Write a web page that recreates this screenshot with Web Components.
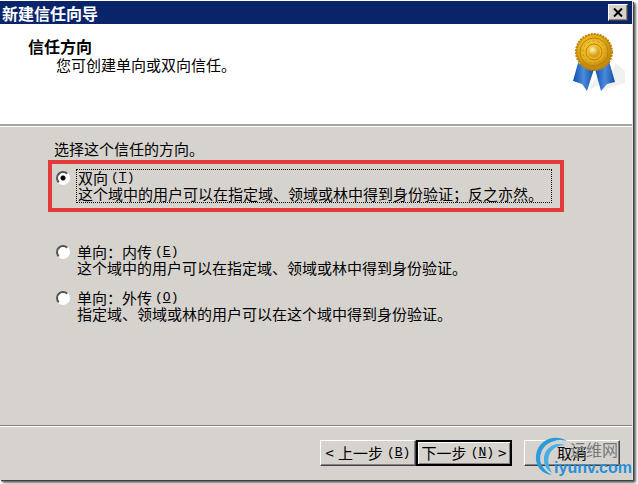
<!DOCTYPE html>
<html lang="zh-CN">
<head>
<meta charset="utf-8">
<meta name="viewport" content="width=device-width, initial-scale=1">
<title>新建信任向导</title>
<style>
  body {
    margin: 0;
    background: white;
    font: 15px/16px "Noto Sans CJK SC", sans-serif;
    color: black;
  }
</style>
</head>
<body>
<trust-wizard>
  <title-bar slot="title">新建信任向导</title-bar>
  <wizard-header slot="header">
    信任方向
    <span slot="subtitle">您可创建单向或双向信任。</span>
  </wizard-header>
  <direction-options>选择这个信任的方向。</direction-options>
  <wizard-button slot="actions" key="B" before="&lt;">上一步</wizard-button>
  <wizard-button slot="actions" key="N" after="&gt;" default>下一步</wizard-button>
  <wizard-button slot="actions" spaced>取消</wizard-button>
  <site-watermark slot="watermark"></site-watermark>
</trust-wizard>

<script>
class TrustWizard extends HTMLElement {
  constructor() {
    super();
    this.attachShadow({ mode: 'open' }).innerHTML = `
      <style>
        :host {
          display: flex;
          box-sizing: border-box;
          min-height: 100vh;
          padding: 1px 5px 4px 0;
        }
        .window {
          flex: 1;
          position: relative;
          display: flex;
          flex-direction: column;
          background: #d6d3ce;
          border-right: 1px solid #e8e6e2;
          box-shadow: 1px 1px 0 #404040, 2px 2px 2px #555, 3px 3px 3px #999;
        }
        main {
          flex: 1;
          padding: 14px 48px 0 50px;
        }
        footer {
          display: flex;
          justify-content: flex-end;
          padding: 14px 12px;
          border-top: 1px solid #848284;
          box-shadow: inset 0 1px white;
        }
      </style>
      <div class="window">
        <slot name="title"></slot>
        <slot name="header"></slot>
        <main><slot></slot></main>
        <footer><slot name="actions"></slot></footer>
        <slot name="watermark"></slot>
      </div>
    `;
  }
}

class TitleBar extends HTMLElement {
  constructor() {
    super();
    this.attachShadow({ mode: 'open' }).innerHTML = `
      <style>
        :host {
          display: flex;
          align-items: center;
          justify-content: space-between;
          height: 23px;
          padding: 0 4px 0 2px;
          background: #0a246a;
          color: white;
          font-size: 16px;
          font-weight: 700;
        }
        button {
          display: grid;
          place-items: center;
          width: 20px;
          height: 17px;
          padding: 0;
          background: #d6d3ce;
          border: 1px solid;
          border-color: white #404040 #404040 white;
          box-shadow: inset -1px -1px #848284;
        }
      </style>
      <span><slot></slot></span>
      <button type="button" aria-label="关闭">
        <svg width="10" height="9" viewBox="0 0 10 9">
          <path d="M1 0.5 L9 8.5 M9 0.5 L1 8.5" stroke="black" stroke-width="2"/>
        </svg>
      </button>
    `;
  }
}

class WizardHeader extends HTMLElement {
  constructor() {
    super();
    this.attachShadow({ mode: 'open' }).innerHTML = `
      <style>
        :host {
          display: flex;
          justify-content: space-between;
          height: 100px;
          background: white;
          border-bottom: 2px solid #a5a2a0;
          box-shadow: 0 1px white;
        }
        .text { padding: 12px 0 0 28px; }
        h1 {
          margin: 0;
          font-size: 16px;
          line-height: 20px;
        }
        p {
          margin: 0;
          padding: 0 0 0 28px;
          line-height: 18px;
        }
        svg { margin: 7px 6px 0 0; }
      </style>
      <div class="text">
        <h1><slot></slot></h1>
        <p><slot name="subtitle"></slot></p>
      </div>
      <svg width="54" height="62" viewBox="0 0 54 62" aria-hidden="true">
        <defs>
          <radialGradient id="gold" cx="45%" cy="40%">
            <stop offset="0" stop-color="#f8d23c"/>
            <stop offset=".7" stop-color="#e6b01a"/>
            <stop offset="1" stop-color="#c48b0c"/>
          </radialGradient>
          <radialGradient id="knob" cx="38%" cy="30%">
            <stop offset="0" stop-color="#fff6b0"/>
            <stop offset="1" stop-color="#d9a01c"/>
          </radialGradient>
          <linearGradient id="ribbon">
            <stop offset="0" stop-color="#0d4fae"/>
            <stop offset=".5" stop-color="#4b8ade"/>
            <stop offset="1" stop-color="#134f9f"/>
          </linearGradient>
        </defs>
        <path d="M16 60 L28 40 L32 50 Z M30 59 L44 32 L53 40 L53 52 Z" fill="#f0f0f0"/>
        <path d="M6 32 L22 38 L15 60 L10 53 L1 50 Z" fill="url(#ribbon)"/>
        <path d="M23 38 L37 30 L43 51 L35 53 L29 60 Z" fill="url(#ribbon)"/>
        <circle cx="22" cy="21" r="18" fill="url(#gold)"/>
        <circle cx="22" cy="21" r="18" fill="none" stroke="#bd8408" stroke-width="2" stroke-dasharray="2 1"/>
        <circle cx="22" cy="21" r="14" fill="none" stroke="#bb8210"/>
        <circle cx="22" cy="21" r="11" fill="none" stroke="#c8921a" stroke-dasharray="2 3"/>
        <circle cx="22" cy="21" r="8" fill="none" stroke="#b9800e"/>
        <circle cx="22" cy="21" r="6" fill="url(#knob)"/>
      </svg>
    `;
  }
}

class DirectionOptions extends HTMLElement {
  constructor() {
    super();
    const options = [
      { id: 'both', name: '双向', key: 'T', text: '这个域中的用户可以在指定域、领域或林中得到身份验证；反之亦然。' },
      { id: 'in', name: '单向：内传', key: 'E', text: '这个域中的用户可以在指定域、领域或林中得到身份验证。' },
      { id: 'out', name: '单向：外传', key: 'O', text: '指定域、领域或林的用户可以在这个域中得到身份验证。' }
    ];
    this.attachShadow({ mode: 'open' }).innerHTML = `
      <style>
        :host { display: block; }
        fieldset {
          margin: 0;
          padding: 0;
          border: 0;
          min-width: 0;
        }
        legend {
          padding: 0 0 0 4px;
          line-height: 18px;
        }
        .option {
          display: flex;
          align-items: flex-start;
          gap: 6px;
          padding: 0 6px;
          margin-bottom: 14px;
        }
        .option.both {
          width: fit-content;
          padding: 5px 8px 5px 4px;
          margin: 2px 0 32px -2px;
          border: 4px solid #e33b3b;
        }
        input {
          appearance: none;
          flex: none;
          box-sizing: border-box;
          width: 14px;
          height: 14px;
          margin: 1px 0 0;
          border: 2px solid;
          border-color: #555 white white #555;
          border-radius: 50%;
          background: white;
        }
        input:checked {
          background: radial-gradient(circle, black 2px, white 3px);
        }
        label { padding: 0 1px; }
        .both label {
          padding: 0 8px 0 1px;
          border: 1px dotted black;
        }
        .both input { margin-top: 2px; }
        .name {
          display: flex;
          align-items: center;
          gap: 3px;
          height: 16px;
        }
        .key { font: 13px/16px "Liberation Mono", monospace; }
        .text { display: block; }
      </style>
      <fieldset>
        <legend><slot></slot></legend>
        ${options.map(option => `
          <div class="option ${option.id}">
            <input type="radio" name="direction" id="${option.id}" ${option.id === 'both' ? 'checked' : ''}>
            <label for="${option.id}">
              <span class="name">${option.name}<span class="key">(<u>${option.key}</u>)</span></span>
              <span class="text">${option.text}</span>
            </label>
          </div>
        `).join('')}
      </fieldset>
    `;
  }
}

class WizardButton extends HTMLElement {
  constructor() {
    super();
    this.attachShadow({ mode: 'open' });
  }

  connectedCallback() {
    const key = this.getAttribute('key');
    const before = this.getAttribute('before');
    const after = this.getAttribute('after');
    this.shadowRoot.innerHTML = `
      <style>
        :host { display: block; }
        :host([spaced]) { margin-left: 12px; }
        button {
          display: flex;
          align-items: center;
          justify-content: center;
          gap: 4px;
          width: 96px;
          height: 26px;
          padding: 0;
          background: #d6d3ce;
          border: 1px solid;
          border-color: white #404040 #404040 white;
          box-shadow: inset -1px -1px #848284;
          color: black;
          font: inherit;
          white-space: nowrap;
        }
        :host([default]) button {
          border: 2px solid black;
          box-shadow: inset 1px 1px white, inset -1px -1px #848284;
        }
        .key { font: 13px/16px "Liberation Mono", monospace; }
      </style>
      <button type="button">
        ${before ? `<span>${before}</span>` : ''}
        <slot></slot>
        ${key ? `<span class="key">(<u>${key}</u>)</span>` : ''}
        ${after ? `<span>${after}</span>` : ''}
      </button>
    `;
  }
}

class SiteWatermark extends HTMLElement {
  constructor() {
    super();
    this.attachShadow({ mode: 'open' }).innerHTML = `
      <style>
        :host {
          position: absolute;
          right: 0;
          bottom: 2px;
          display: flex;
          align-items: flex-end;
          pointer-events: none;
        }
        svg { margin-right: -20px; }
        .text {
          display: flex;
          flex-direction: column;
        }
        .name {
          padding-left: 16px;
          color: #77787a;
          font-size: 16px;
          line-height: 18px;
        }
        .site {
          color: #2b8fd6;
          font: 700 16px/20px "Liberation Sans", sans-serif;
        }
      </style>
      <svg width="40" height="42" viewBox="0 0 40 42" fill="none" aria-hidden="true">
        <path d="M33 5 C20 -3 3 5 2 20 C1 30 8 38 18 39 C9 34 4 26 7 17 C10 7 21 2 33 5 Z" fill="#2b9bdc"/>
        <path d="M31 9 C20 5 9 13 10 24 C10 30 13 34 18 37 C14 29 13 23 16 17 C19 12 24 9 31 9 Z" fill="#46aee4"/>
      </svg>
      <div class="text">
        <span class="name">运维网</span>
        <span class="site">iyunv.com</span>
      </div>
    `;
  }
}

customElements.define('trust-wizard', TrustWizard);
customElements.define('title-bar', TitleBar);
customElements.define('wizard-header', WizardHeader);
customElements.define('direction-options', DirectionOptions);
customElements.define('wizard-button', WizardButton);
customElements.define('site-watermark', SiteWatermark);
</script>
</body>
</html>
